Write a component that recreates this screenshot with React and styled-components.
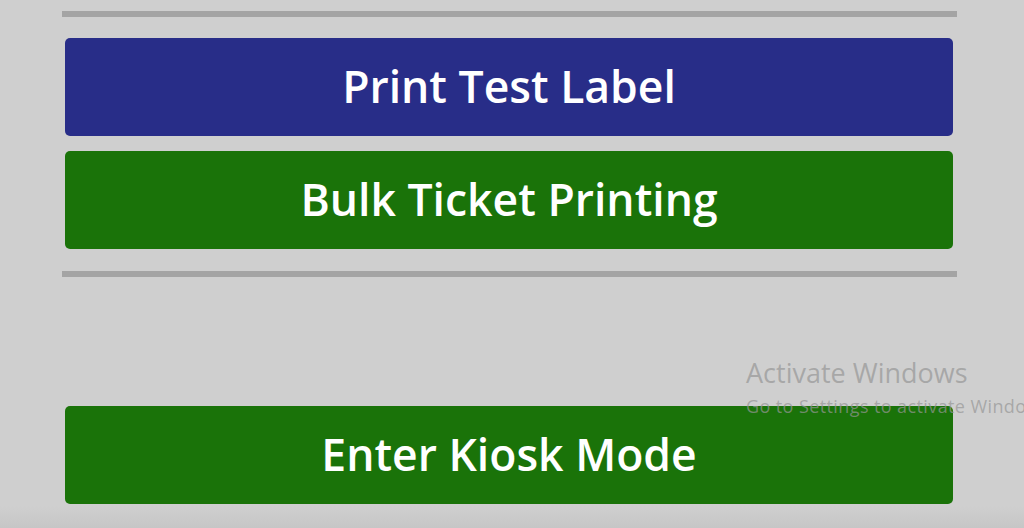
import React from "react";
import styled, { createGlobalStyle } from "styled-components";

const GlobalStyle = createGlobalStyle`
  html, body {
    margin: 0;
    padding: 0;
    background: #cfcfcf;
  }
  body {
    font-family: "Open Sans", "Noto Sans", sans-serif;
    overflow: hidden;
  }
`;

const Screen = styled.div`
  position: relative;
  width: 1024px;
  height: 528px;
  overflow: hidden;
  background: linear-gradient(to bottom, #cfcfcf 0, #cfcfcf 506px, #c6c6c6 528px);
`;

const Panel = styled.div`
  width: 895px;
  margin-left: 62px;
  padding-top: 11px;
  display: flex;
  flex-direction: column;
`;

const Divider = styled.div`
  height: 6px;
  background: #a4a4a4;
  margin-top: ${(p) => p.top || 0}px;
  margin-bottom: ${(p) => p.bottom || 0}px;
`;

const ButtonGroup = styled.div`
  display: flex;
  flex-direction: column;
  gap: 15px;
  margin: 0 4px 0 3px;
`;

const ActionButton = styled.button`
  height: 98px;
  border: none;
  border-radius: 5px;
  background: ${(p) => (p.variant === "blue" ? "#282d88" : "#1a7309")};
  color: #ffffff;
  font-family: "Open Sans", "Noto Sans", sans-serif;
  font-weight: 600;
  font-size: 44.5px;
  display: flex;
  align-items: center;
  justify-content: center;
  padding: 0 0 4px;
  cursor: pointer;
`;

const Spacer = styled.div`
  height: 129px;
`;

const Watermark = styled.div`
  position: absolute;
  left: 746px;
  top: 357px;
  color: rgba(150, 150, 150, 0.7);
  font-family: "Open Sans", "Noto Sans", sans-serif;
  white-space: nowrap;
  pointer-events: none;
`;

const WatermarkTitle = styled.div`
  font-size: 27px;
  line-height: 32px;
`;

const WatermarkSub = styled.div`
  font-size: 18px;
  line-height: 22px;
  letter-spacing: 0.4px;
  margin-top: 6px;
`;

export default function App() {
  return (
    <Screen>
      <GlobalStyle />
      <Panel>
        <Divider bottom={21} />
        <ButtonGroup>
          <ActionButton variant="blue">Print Test Label</ActionButton>
          <ActionButton variant="green">Bulk Ticket Printing</ActionButton>
        </ButtonGroup>
        <Divider top={22} />
        <Spacer />
        <ButtonGroup>
          <ActionButton variant="green">Enter Kiosk Mode</ActionButton>
        </ButtonGroup>
      </Panel>
      <Watermark>
        <WatermarkTitle>Activate Windows</WatermarkTitle>
        <WatermarkSub>Go to Settings to activate Windows.</WatermarkSub>
      </Watermark>
    </Screen>
  );
}
